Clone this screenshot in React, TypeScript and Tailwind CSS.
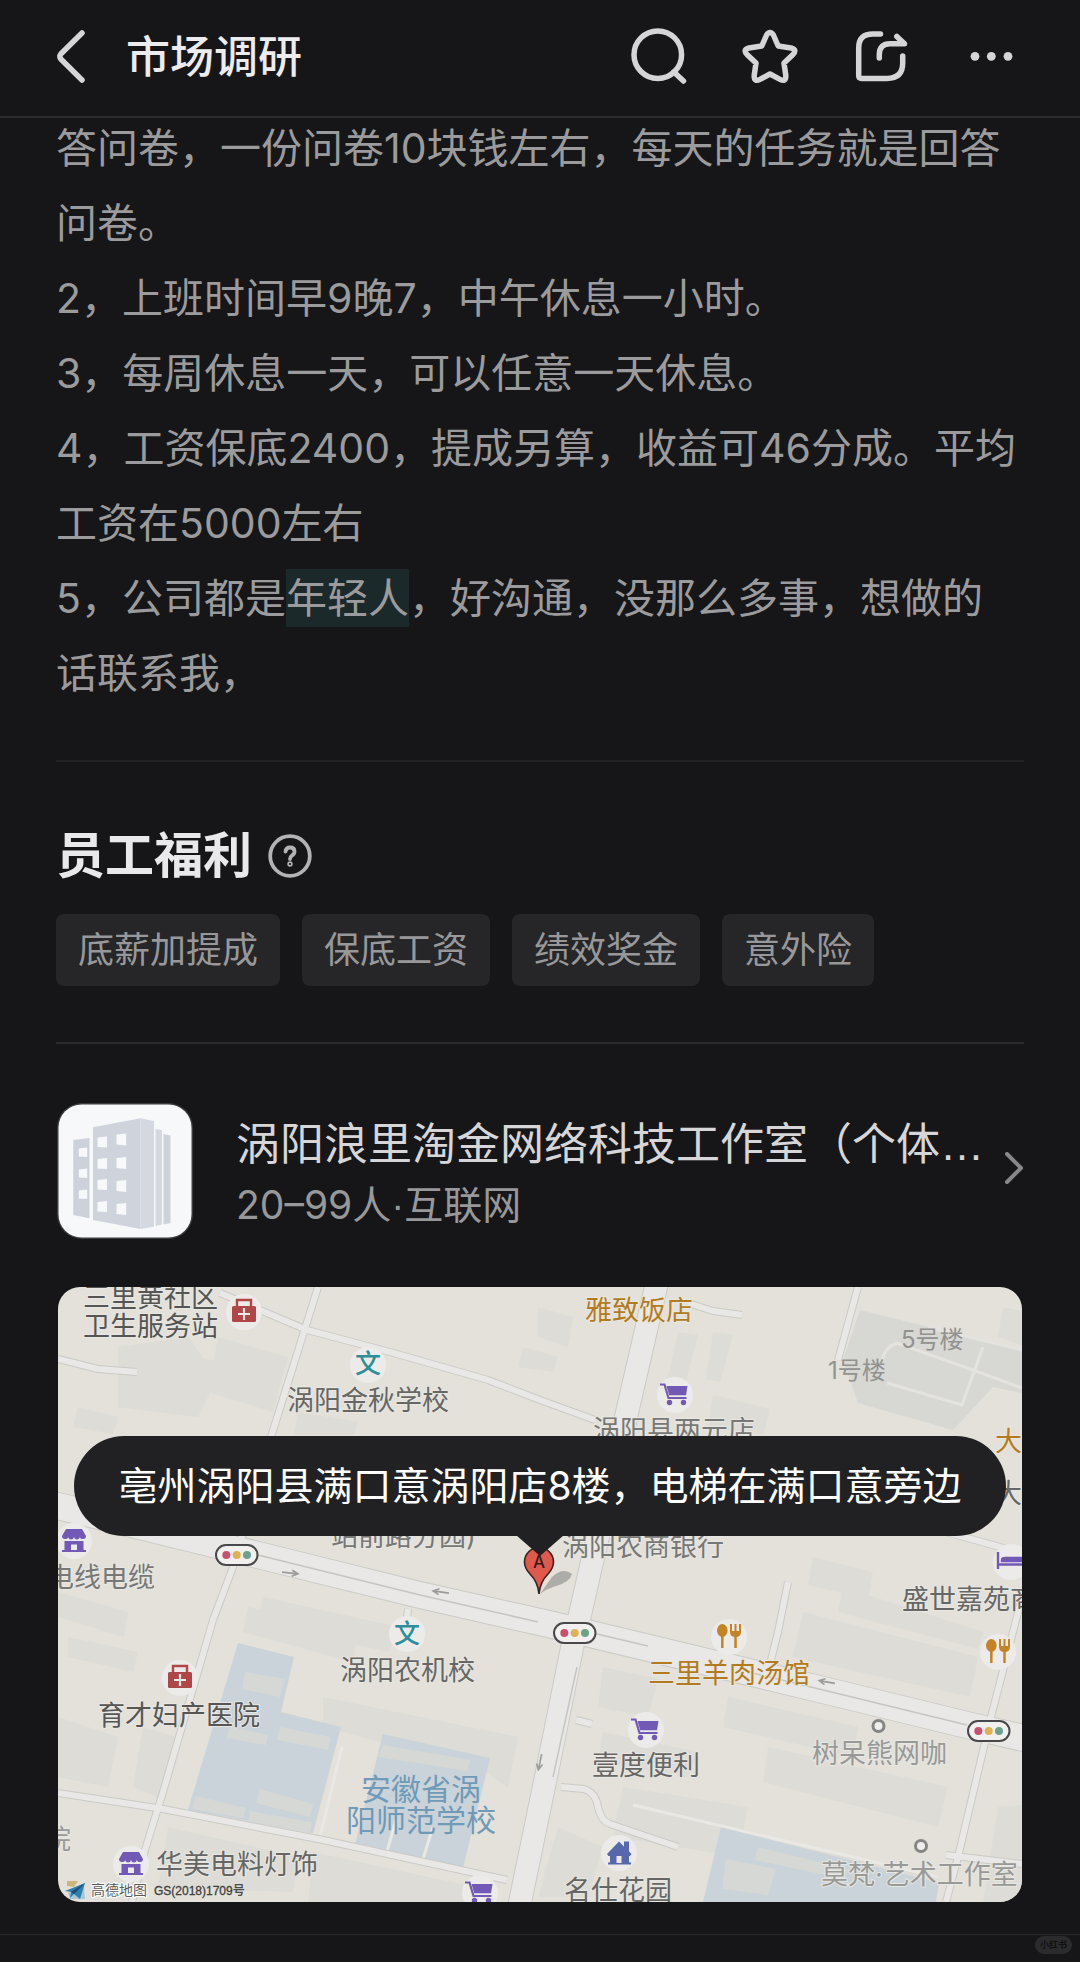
import React from 'react';

const jobLines = [
  '答问卷，一份问卷10块钱左右，每天的任务就是回答问卷。',
  '2，上班时间早9晚7，中午休息一小时。',
  '3，每周休息一天，可以任意一天休息。',
  '4，工资保底2400，提成另算，收益可46分成。平均工资在5000左右',
];

const benefits = ['底薪加提成', '保底工资', '绩效奖金', '意外险'];

const iconProps = {
  viewBox: '0 0 64 64',
  fill: 'none',
  stroke: 'currentColor',
  strokeWidth: 5.5,
  strokeLinecap: 'round' as const,
  strokeLinejoin: 'round' as const,
  className: 'size-16',
};

const Header: React.FC = () => (
  <header className="relative z-10 flex h-[118px] items-center border-b-2 border-[#2c2c2e] bg-[#161618] px-14 text-[#d5d5d7]">
    <button type="button" aria-label="返回" className="shrink-0">
      <svg {...iconProps} viewBox="0 0 40 64" className="h-16 w-10">
        <path d="M26 7 4.8 28Q3 30.5 4.8 33L26 54" />
      </svg>
    </button>
    <h1 className="ml-[30px] flex-1 pb-[2px] text-[44px] leading-[60px] font-medium text-[#ececee]">市场调研</h1>
    <nav className="flex items-center gap-[47px]">
      <button type="button" aria-label="搜索">
        <svg {...iconProps}>
          <circle cx="30.8" cy="28.7" r="23.8" />
          <path d="M46.8 46 56.5 55" />
        </svg>
      </button>
      <button type="button" aria-label="收藏">
        <svg {...iconProps}>
          <path d="M28.6 9Q32 4 35.4 9L40.2 20 53 22Q59.5 23.6 55 28.4L46 37 47.8 49.5Q48 56.5 42 53.4L32 48 22 53.4Q16 56.5 16.2 49.5L18 37 9 28.4Q4.5 23.6 11 22L23.8 20Z" />
        </svg>
      </button>
      <button type="button" aria-label="分享">
        <svg {...iconProps}>
          <path d="M31.5 8H24Q9.7 8 9.7 22V49.5Q9.7 52.4 12.6 52.4H38Q53.7 52.4 53.7 37V30" />
          <path d="M30.3 32V28.5Q30.3 17.8 41 17.8H55.5L47.8 10.5" />
        </svg>
      </button>
      <button type="button" aria-label="更多">
        <svg {...iconProps} fill="currentColor" stroke="none">
          <circle cx="15" cy="30.3" r="4.4" />
          <circle cx="31.3" cy="30.3" r="4.4" />
          <circle cx="48" cy="30.3" r="4.4" />
        </svg>
      </button>
    </nav>
  </header>
);

const CompanyLogo: React.FC = () => (
  <svg viewBox="0 0 138 138" className="size-[138px] shrink-0" aria-hidden="true">
    <rect x="1" y="1" width="136" height="136" rx="25" fill="#3c3c3e" />
    <rect x="2.5" y="2.5" width="133" height="133" rx="23" fill="#f7f8fa" />
    <path d="M17.3 38 33.5 36V116.3L17.3 113Z" fill="#cdd1da" />
    <path d="M37 25.3 84.5 16.3V127L37 118Z" fill="#cfd3dc" />
    <path d="M84.5 16.3 98 19V124.7L84.5 127Z" fill="#d4d8e0" />
    <path d="M99.5 27 106 28V122.5L99.5 124Z" fill="#d4d8e0" />
    <path d="M107.5 32 114.5 33.5V121L107.5 122.5Z" fill="#cdd1da" />
    {[45.5, 66.5, 87.5].map(y => (
      <path key={y} d={`M22.8 ${y + 1}l8.4-1v9.5l-8.4-.5z`} fill="#f7f8fa" />
    ))}
    {[34.5, 56, 77, 99].map(y => (
      <path key={y} d={`M41.5 ${y + 1}l9.5-1v11l-9.5-.5z`} fill="#f7f8fa" />
    ))}
    {[31.5, 55, 78, 101].map(y => (
      <path key={y} d={`M60.5 ${y + 1}l9.7-1v12l-9.7-1z`} fill="#f7f8fa" />
    ))}
  </svg>
);

interface Spot {
  x: number;
  y: number;
}

const Halo: React.FC<Spot> = ({ x, y }) => <circle cx={x} cy={y} r="18" fill="#ecebea" />;

const Hospital: React.FC<Spot> = ({ x, y }) => (
  <g transform={`translate(${x} ${y})`}>
    <Halo x={12} y={13} />
    <path d="M5 7V1H19V7" fill="none" stroke="#b04648" strokeWidth="2.4" />
    <rect y="7" width="24" height="16" rx="1.5" fill="#b04648" />
    <path d="M12 9V21M6 15H18" stroke="#ecebea" strokeWidth="2.2" />
  </g>
);

const Cart: React.FC<Spot> = ({ x, y }) => (
  <g transform={`translate(${x} ${y})`}>
    <Halo x={15} y={12} />
    <path d="M0 1.5H4.5L8.5 15H26.5" fill="none" stroke="#7159b5" strokeWidth="2.2" />
    <path d="M6.5 3H27.5L26 12.2H9.2Z" fill="#7159b5" />
    <circle cx="9.5" cy="19.5" r="2.7" fill="#7159b5" />
    <circle cx="23.5" cy="19.5" r="2.7" fill="#7159b5" />
  </g>
);

const Store: React.FC<Spot> = ({ x, y }) => (
  <g transform={`translate(${x} ${y})`}>
    <Halo x={12} y={12} />
    <path d="M4 0H20L24 7Q24 10 21 10 18 10 18 8 17 10.5 15 10.5 12.5 10.5 12 8 11.5 10.5 9 10.5 7 10.5 6 8 6 10 3 10 0 10 0 7Z" fill="#7159b5" />
    <path d="M2.5 12H21.5V21H24V23H0V21H2.5ZM9 15.5V21H15V15.5Z" fillRule="evenodd" fill="#7159b5" />
  </g>
);

const Food: React.FC<Spot> = ({ x, y }) => (
  <g transform={`translate(${x} ${y})`}>
    <Halo x={12} y={13} />
    <ellipse cx="5.3" cy="6.5" rx="5.3" ry="6.5" fill="#c48426" />
    <path d="M5.3 10V24M18.5 10V24" stroke="#c48426" strokeWidth="2.5" />
    <path d="M13 0H15V7H17.5V0H19.5V7H22V0H24V8Q24 13 18.5 13 13 13 13 8Z" fill="#c48426" />
  </g>
);

const TrafficLight: React.FC<Spot> = ({ x, y }) => (
  <g transform={`translate(${x} ${y})`}>
    <rect x="1" y="1" width="41.5" height="20" rx="10" fill="#f1f0ef" stroke="#48484a" strokeWidth="2" />
    <circle cx="11.3" cy="11" r="4" fill="#c9506e" />
    <circle cx="21.7" cy="11" r="4" fill="#dcb255" />
    <circle cx="32" cy="11" r="4" fill="#6ca28c" />
  </g>
);

const Arrow: React.FC<Spot & { turn: number }> = ({ x, y, turn }) => (
  <path
    transform={`translate(${x} ${y}) rotate(${turn})`}
    d="M-8 0H8M2-3 8 0 2 3"
    fill="none"
    stroke="#9b9b99"
    strokeWidth="1.6"
  />
);

const blocks = [
  'M60 60 130 50 160 90 140 130 60 120Z',
  'M100 60 160 75 150 105 95 95Z',
  'M160 50 230 70 215 125 150 105Z',
  'M20 120 60 130 55 147 15 140Z',
  'M240 125 300 135 296 148 236 148Z',
  'M480 20 515 30 510 60 480 50Z',
  'M620 45 640 48 625 105 608 100Z',
  'M655 45 675 48 662 95 648 92Z',
  'M655 108 712 122 705 148 650 140Z',
  'M465 60 500 70 495 85 460 80Z',
  'M945 20 964 24V58L940 50Z',
  'M0 305 70 325 66 350 0 330Z',
  'M190 320 300 345 295 375 185 345Z',
  'M265 410 460 450 450 500 420 480 265 440Z',
  'M205 310 340 340 330 365 200 335Z',
  'M10 350 80 365 75 385 10 370Z',
  'M0 430 60 450 50 500 0 490Z',
  'M85 440 120 450 100 510 75 500Z',
  'M755 270 815 285 810 312 750 298Z',
  'M745 325 920 370 912 410 735 370Z',
  'M785 300 925 345 920 362 780 325Z',
  'M545 380 600 392 590 430 540 420Z',
  'M670 410 800 440 795 470 665 440Z',
  'M710 460 890 500 880 540 705 495Z',
  'M565 500 690 520 685 545 560 525Z',
  'M545 445 640 465 630 490 540 475Z',
  'M560 520 880 590 877 600 555 550Z',
  'M110 540 240 570 235 605 100 600Z',
  'M255 565 440 605 436 615 250 615Z',
  'M500 540 545 560 530 610 480 610Z',
  'M940 520 964 518V615H925Z',
];

const minorRoads = [
  'M260 0 213 150 175 280 155 333 105 505 87 563 74 615',
  'M162 6 209 26 249 43 332 65 430 93 482 113 537 133',
  'M0 72 40 82 79 85',
  'M0 506 105 522 265 553 449 593',
  'M800 0 780 73',
  'M630 16 655 24 684 28',
  'M870 240 949 262',
  'M730 295 720 345 713 373',
  'M350 322 346 360',
  'M964 310 933 430 900 570 888 615',
  'M503 500 526 502Q538 506 540 520 543 534 552 537L620 560',
  'M518 433 534 437',
  'M888 568 964 577',
];

const schoolGrounds = [
  'M180 356 236 370 223 425 283 440 255 546 130 523Z',
  'M325 447 432 471 405 581 297 558Z',
  'M663 540 881 596 878 615H645Z',
];

const schoolHouses = [
  'M187 385 227 392 222 410 184 402Z',
  'M172 440 210 448 208 458 168 451Z',
  'M222 440 273 450 270 463 219 453Z',
  'M138 509 188 521 185 531 134 522Z',
  'M202 502 255 517 252 530 198 516Z',
  'M192 524 254 535 252 546 190 535Z',
  'M325 458 413 473 409 484 320 470Z',
  'M668 572 718 582 710 608 664 602Z',
  'M700 560 790 582 786 592 697 573Z',
];

const mainStreet = 'M-10 217 0 219 200 268 362 308 495 338 757 401 909 438 974 453';
const crossStreet = 'M600 -10 598 0 568 130 534 275 521 332 514 361 490 480 460 625';

const labels = [
  { x: 25, y: 20, text: '三里黄社区', tone: 'fill-[#555554]' },
  { x: 25, y: 49, text: '卫生服务站', tone: 'fill-[#555554]' },
  { x: 229, y: 123, text: '涡阳金秋学校', tone: 'fill-[#666664]' },
  { x: 527, y: 33, text: '雅致饭店', tone: 'fill-[#b37b20]' },
  { x: 535, y: 153, text: '涡阳县两元店', tone: 'fill-[#777775]' },
  { x: 937, y: 164, text: '大', tone: 'fill-[#b37b20]' },
  { x: 937, y: 216, text: '大', tone: 'fill-[#666664]' },
  { x: -11, y: 300, text: '电线电缆', tone: 'fill-[#777775]' },
  { x: 273, y: 259, text: '站前路分园)', tone: 'fill-[#777775]' },
  { x: 504, y: 269, text: '涡阳农商银行', tone: 'fill-[#777775]' },
  { x: 844, y: 322, text: '盛世嘉苑商', tone: 'fill-[#666664]' },
  { x: 282, y: 393, text: '涡阳农机校', tone: 'fill-[#666664]' },
  { x: 40, y: 438, text: '育才妇产医院', tone: 'fill-[#555554]' },
  { x: -14, y: 562, text: '院', tone: 'fill-[#999997]' },
  { x: 98, y: 587, text: '华美电料灯饰', tone: 'fill-[#666664]' },
  { x: 590, y: 396, text: '三里羊肉汤馆', tone: 'fill-[#b37b20]' },
  { x: 754, y: 476, text: '树呆熊网咖', tone: 'fill-[#999997]' },
  { x: 534, y: 488, text: '壹度便利', tone: 'fill-[#666664]' },
  { x: 506, y: 613, text: '名仕花园', tone: 'fill-[#666664]' },
  { x: 763, y: 597, text: '莫梵·艺术工作室', tone: 'fill-[#999997]' },
];

const StreetMap: React.FC = () => (
  <svg viewBox="0 0 964 615" className="block w-full" role="img" aria-label="公司位置地图">
    <rect width="964" height="615" fill="#e3e1da" />
    <g fill="#dddcd6">
      {blocks.map(d => (
        <path key={d} d={d} />
      ))}
    </g>
    <path d="M802 23 964 63V106L935 100 895 143 800 116 785 73Z" fill="#d7d7d4" />
    <path d="M824 75Q826 60 839 56L915 83 964 101M925 60 904 118 829 96M870 40 964 63" fill="none" stroke="#e4e3df" strokeWidth="3" />
    <g fill="#cad3d9">
      {schoolGrounds.map(d => (
        <path key={d} d={d} />
      ))}
    </g>
    <g fill="#d5d8d5">
      {schoolHouses.map(d => (
        <path key={d} d={d} />
      ))}
    </g>
    <path d="M338 533 328 568M375 540 364 575M284 460 262 550M575 518 880 590" fill="none" stroke="#e9e8e4" strokeWidth="3" />

    <g fill="none" stroke="#cbcac6" strokeLinejoin="round">
      {minorRoads.map(d => (
        <path key={d} d={d} strokeWidth="8" />
      ))}
      <path d={crossStreet} strokeWidth="24" />
      <path d={mainStreet} strokeWidth="28" />
    </g>
    <g fill="none" stroke="#e9e8e6" strokeLinejoin="round">
      {minorRoads.map(d => (
        <path key={d} d={d} strokeWidth="6" />
      ))}
      <path d={crossStreet} strokeWidth="22" />
      <path d={mainStreet} strokeWidth="26" />
    </g>
    <path d="M200 268 362 308 480 335M539 347 590 359M690 385 757 401 909 438M519 380 495 490" fill="none" stroke="#c6c5c2" strokeWidth="1.5" />

    <Arrow x={232} y={286} turn={6} />
    <Arrow x={383} y={305} turn={188} />
    <Arrow x={769} y={395} turn={190} />
    <Arrow x={482} y={475} turn={102} />

    <Hospital x={174} y={12} />
    <Hospital x={110} y={378} />
    <Cart x={602} y={96} />
    <Cart x={573} y={431} />
    <Cart x={407} y={594} />
    <Store x={4} y={242} />
    <Store x={61} y={565} />
    <Food x={659} y={337} />
    <Food x={928} y={352} />
    <TrafficLight x={157} y={257} />
    <TrafficLight x={495} y={335} />
    <TrafficLight x={909} y={433} />

    <Halo x={953} y={275} />
    <path d="M940 265V282M940 277.5H964M944 274V273Q944 271 947 271H964V274Z" fill="#7159b5" stroke="#7159b5" strokeWidth="2.4" />
    <Halo x={561} y={566} />
    <path d="M549 567 561 554.5 566 559.5V554.5H571V564.5L573.5 567 572 569H571V575.5H573V577.5H550V575.5H552V569H550.5ZM558.5 569V576H563.5V569Z" fillRule="evenodd" fill="#5667ab" />
    <circle cx="820.5" cy="439" r="5.5" fill="#efeeec" stroke="#858583" strokeWidth="3" />
    <circle cx="863" cy="559" r="5.5" fill="#efeeec" stroke="#858583" strokeWidth="3" />

    <Halo x={310} y={78} />
    <Halo x={349} y={347} />
    <g className="fill-[#2b8e99] text-[26px] font-medium">
      <text x="297" y="86">文</text>
      <text x="336" y="356">文</text>
    </g>

    <g className="text-[27px]" stroke="#e8e7e3" strokeWidth="2" paintOrder="stroke">
      {labels.map(({ x, y, text, tone }) => (
        <text key={`${text}${y}`} x={x} y={y} className={tone}>{text}</text>
      ))}
    </g>
    <g className="fill-[#929290] text-[24px]">
      <text x="843" y="61">5号楼</text>
      <text x="770" y="92">1号楼</text>
    </g>
    <g className="fill-[#6f9ab8] text-[30px]">
      <text x="303" y="513">安徽省涡</text>
      <text x="288" y="544">阳师范学校</text>
    </g>

    <path d="M9 594H20L16 600 9 599Z" fill="#c9b878" />
    <path d="M10 606 26 600 27 612H12Z" fill="#a9c6d4" />
    <path d="M7 604 27 596 22 612 16 607 12 611 13 605Z" fill="#2c7fae" />
    <path d="M13 605 27 596 16 607Z" fill="#1c4d74" />
    <text x="33" y="608" className="fill-[#5c5c5b] text-[14px]" stroke="#fff" strokeWidth="2" paintOrder="stroke">高德地图</text>
    <text x="96" y="608" className="fill-[#3e3e3e] font-['Liberation_Sans','Noto_Sans_CJK_SC',sans-serif] text-[12px]" stroke="#3e3e3e" strokeWidth="0.3">GS(2018)1709号</text>

    <path d="M482 307 494 290Q505 280 514 287 512 295 498 299 488 302 482 307Z" fill="#6d6d6b" opacity=".45" />
    <path d="M481 307Q480 295 472 287 466.5 281 466.5 275A14.5 14.5 0 0 1 495.5 275Q495.5 281 490 287 482 295 481 307Z" fill="#df5a4c" stroke="#3d2020" strokeWidth="1.6" />
    <text x="481" y="281" textAnchor="middle" className="fill-[#3a1a1a] text-[17px] font-medium">A</text>
  </svg>
);

const App: React.FC = () => {
  return (
    <div className="min-h-screen overflow-hidden bg-[#161618] font-['Inter','Noto_Sans_CJK_SC',sans-serif]">
      <Header />

      <main className="px-14">
        <section className="-mt-[7px] pr-1 text-[41px] leading-[75px] text-[#9b9b9d]">
          {jobLines.map(line => (
            <p key={line}>{line}</p>
          ))}
          <p>
            5，公司都是<mark className="bg-[#1b292b] py-1 text-inherit">年轻人</mark>，好沟通，没那么多事，想做的话联系我，
          </p>
        </section>

        <hr className="mt-[49px] border-t-2 border-[#222224]" />

        <section className="mt-16">
          <div className="flex items-center gap-4">
            <h2 className="text-[49px] leading-[60px] font-bold text-[#e9e9eb]">员工福利</h2>
            <button type="button" aria-label="福利说明">
              <svg viewBox="0 0 44 44" className="size-11 text-[#b3b3b4]" fill="none" stroke="currentColor" strokeWidth="3.8" strokeLinecap="round">
                <circle cx="22" cy="22" r="19.8" />
                <path d="M17.5 17.5Q18 13.5 22 13.5 26.5 13.5 26.5 17.5 26.5 20 24 21.5 22 23 22 25" />
                <circle cx="22" cy="30" r="0.8" />
              </svg>
            </button>
          </div>
          <ul className="mt-7 flex flex-wrap gap-[22px]">
            {benefits.map(name => (
              <li key={name} className="rounded-lg bg-[#262628] px-[22px] text-[36px] leading-[72px] text-[#98989a]">{name}</li>
            ))}
          </ul>
        </section>

        <hr className="mt-14 border-t-2 border-[#2b2b2d]" />

        <a href="#company" className="mt-[58px] flex items-start gap-[42px]">
          <CompanyLogo />
          <div className="min-w-0 flex-1 pt-3">
            <h3 className="text-[44px] leading-[60px] whitespace-nowrap text-[#d6d6d8]">
              涡阳浪里淘金网络科技工作室（个体<span className="font-['Liberation_Sans',sans-serif]">…</span>
            </h3>
            <p className="text-[39px] leading-[60px] text-[#98989a]">
              20–99人<span className="font-['Liberation_Sans',sans-serif]">·</span>互联网
            </p>
          </div>
          <svg viewBox="0 0 20 32" className="mt-[50px] h-8 w-5 shrink-0 text-[#88888a]" fill="none" stroke="currentColor" strokeWidth="4" strokeLinecap="round" strokeLinejoin="round">
            <path d="M3 2 17 16 3 30" />
          </svg>
        </a>

        <section className="relative mx-[2px] mt-[47px] overflow-hidden rounded-[22px]">
          <StreetMap />
          <div className="absolute inset-x-4 top-[149px] rounded-full bg-[#212123] text-center text-[39px] leading-[100px] whitespace-nowrap text-white">
            亳州涡阳县满口意涡阳店8楼，电梯在满口意旁边
            <svg viewBox="0 0 48 20" className="absolute top-full left-1/2 h-5 w-12 -translate-x-1/2" fill="#212123">
              <path d="M0-1H48L24 20Z" />
            </svg>
          </div>
        </section>
      </main>

      <footer className="mt-8 flex justify-end border-t border-[#29292b] px-2 pt-[1px]">
        <span className="rounded-full bg-[#2b2b2d] px-[5px] text-[9px] leading-[18px] font-bold text-[#111112]">小红书</span>
      </footer>
    </div>
  );
};

export default App;
